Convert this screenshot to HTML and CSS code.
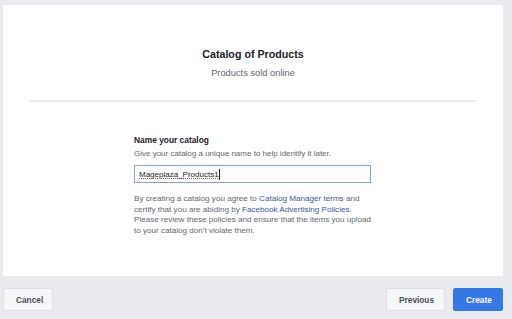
FILE: index.html
```html
<!DOCTYPE html>
<html lang="en">
<head>
    <meta charset="UTF-8">
    <meta name="viewport" content="width=device-width, initial-scale=1.0">
    <title>Create Catalog</title>
    <link rel="stylesheet" href="styles.css">
</head>
<body>
    <div class="dialog">
        <div class="card">
            <div class="header">
                <h2>Catalog of Products</h2>
                <p class="subtitle">Products sold online</p>
            </div>
            <div class="section">
                <div class="field-title">Name your catalog</div>
                <div class="field-help">Give your catalog a unique name to help identify it later.</div>
                <div class="name-input"><span class="typed">Mageplaza_Products1</span><span class="caret"></span></div>
                <p class="terms">
                    By creating a catalog you agree to <a href="#">Catalog Manager terms</a> and<br>
                    certify that you are abiding by <a href="#">Facebook Advertising Policies</a>.<br>
                    Please review these policies and ensure that the items you upload<br>
                    to your catalog don't violate them.
                </p>
            </div>
        </div>
        <div class="footer">
            <button class="btn">Cancel</button>
            <div class="footer-right">
                <button class="btn">Previous</button>
                <button class="btn btn-primary">Create</button>
            </div>
        </div>
    </div>
</body>
</html>
```

FILE: styles.css
```css
body {
    font-family: "Liberation Sans", Arial, sans-serif;
    margin: 0;
    background-color: #e9ebee;
    color: #1d2129;
}
.dialog {
    padding: 5px 9px 0 3px;
}
.card {
    background-color: #fff;
    height: 271px;
    box-sizing: border-box;
    padding-top: 42px;
}
.header {
    margin: 0 26px;
    text-align: center;
    border-bottom: 2px solid #ebedf0;
    height: 53px;
}
h2 {
    margin: 0;
    font-size: 10.7px;
    font-weight: bold;
    line-height: 14px;
}
.subtitle {
    margin: 7px 0 0;
    font-size: 9.3px;
    color: #606770;
}
.section {
    width: 250px;
    margin: 33px 0 0 131px;
}
.field-title {
    font-size: 8.4px;
    font-weight: bold;
    line-height: 10px;
}
.field-help {
    font-size: 8px;
    color: #606770;
    margin-top: 4px;
    line-height: 10px;
}
.name-input {
    display: flex;
    align-items: center;
    width: 237px;
    height: 18px;
    box-sizing: border-box;
    margin-top: 6px;
    border: 1px solid #7fa2e8;
    padding: 0 4px;
    font-size: 8px;
}
.typed {
    text-decoration: underline dotted #e04040;
    text-decoration-thickness: 1px;
}
.caret {
    width: 1px;
    height: 11px;
    background-color: #1d2129;
}
.terms {
    margin: 11px 0 0;
    font-size: 8.1px;
    line-height: 10.5px;
    color: #606770;
    white-space: nowrap;
}
.terms a {
    color: #385898;
    text-decoration: none;
}
.footer {
    display: flex;
    justify-content: space-between;
    margin-top: 12px;
}
.footer-right {
    display: flex;
    gap: 8px;
}
.btn {
    height: 23px;
    padding: 0 12px;
    font-family: "Liberation Sans", Arial, sans-serif;
    font-size: 8.3px;
    font-weight: bold;
    color: #4b4f56;
    background-color: #f5f6f7;
    border: 1px solid #dddfe2;
    border-radius: 2px;
}
.btn:first-child {
    width: 50px;
}
.footer-right .btn {
    width: 59px;
}
.footer-right .btn-primary {
    width: 50px;
    background-color: #3578e5;
    border-color: #3578e5;
    color: #fff;
}
```
